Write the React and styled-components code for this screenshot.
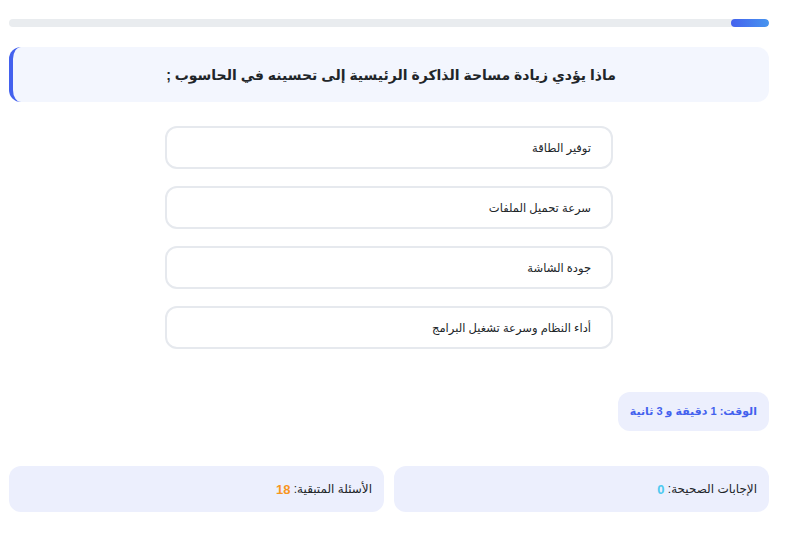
import React from "react";
import styled, { createGlobalStyle } from "styled-components";

const Global = createGlobalStyle`
  html, body { margin: 0; padding: 0; background: #fff; }
  body { font-family: "Liberation Sans", "DejaVu Sans", Arial, sans-serif; }
`;

const Page = styled.div`
  direction: rtl;
  padding: 19px 16px 0 9px;
  display: flex;
  flex-direction: column;
`;

const Track = styled.div`
  height: 8px;
  border-radius: 4px;
  background: #e9ecef;
  overflow: hidden;
  display: flex;
`;

const Fill = styled.div`
  height: 100%;
  border-radius: 4px;
  background: linear-gradient(90deg, #4361ee, #4895ef);
`;

const Question = styled.div`
  margin-top: 20px;
  height: 55px;
  box-sizing: border-box;
  background: #f3f6fe;
  border-radius: 12px;
  border-left: 4px solid #4361ee;
  display: flex;
  align-items: center;
  justify-content: center;
  font-size: 14px;
  font-weight: bold;
  color: #212529;
`;

const Options = styled.div`
  margin: 24px auto 0;
  width: 448px;
  display: flex;
  flex-direction: column;
  gap: 17px;
`;

const Option = styled.div`
  height: 43px;
  box-sizing: border-box;
  border: 2px solid #e6e9ee;
  border-radius: 12px;
  background: #fff;
  display: flex;
  align-items: center;
  padding: 0 20px;
  font-size: 11.5px;
  color: #212529;
`;

const TimerRow = styled.div`
  margin-top: 43px;
  display: flex;
`;

const Timer = styled.div`
  height: 39px;
  box-sizing: border-box;
  padding: 0 12px;
  background: #eceffd;
  border-radius: 12px;
  display: flex;
  align-items: center;
  font-size: 11px;
  font-weight: bold;
  color: #4361ee;
`;

const Stats = styled.div`
  margin-top: 35px;
  display: grid;
  grid-template-columns: 1fr 1fr;
  gap: 10px;
`;

const Stat = styled.div`
  height: 46px;
  box-sizing: border-box;
  background: #eceffd;
  border-radius: 12px;
  display: flex;
  align-items: center;
  padding: 0 12px;
  font-size: 12px;
  color: #212529;
`;

const Num = styled.span`
  font-weight: bold;
  font-size: 13px;
  color: ${(p) => p.$color};
`;

export default function App() {
  const opts = [
    "توفير الطاقة",
    "سرعة تحميل الملفات",
    "جودة الشاشة",
    "أداء النظام وسرعة تشغيل البرامج",
  ];
  return (
    <>
      <Global />
      <Page>
        <Track>
          <Fill style={{ width: "5%" }} />
        </Track>
        <Question>ماذا يؤدي زيادة مساحة الذاكرة الرئيسية إلى تحسينه في الحاسوب ;</Question>
        <Options>
          {opts.map((o) => (
            <Option key={o}>{o}</Option>
          ))}
        </Options>
        <TimerRow>
          <Timer>الوقت: 1 دقيقة و 3 ثانية</Timer>
        </TimerRow>
        <Stats>
          <Stat>
            الإجابات الصحيحة:&nbsp;<Num $color="#4cc9f0">0</Num>
          </Stat>
          <Stat>
            الأسئلة المتبقية:&nbsp;<Num $color="#f8961e">18</Num>
          </Stat>
        </Stats>
      </Page>
    </>
  );
}
